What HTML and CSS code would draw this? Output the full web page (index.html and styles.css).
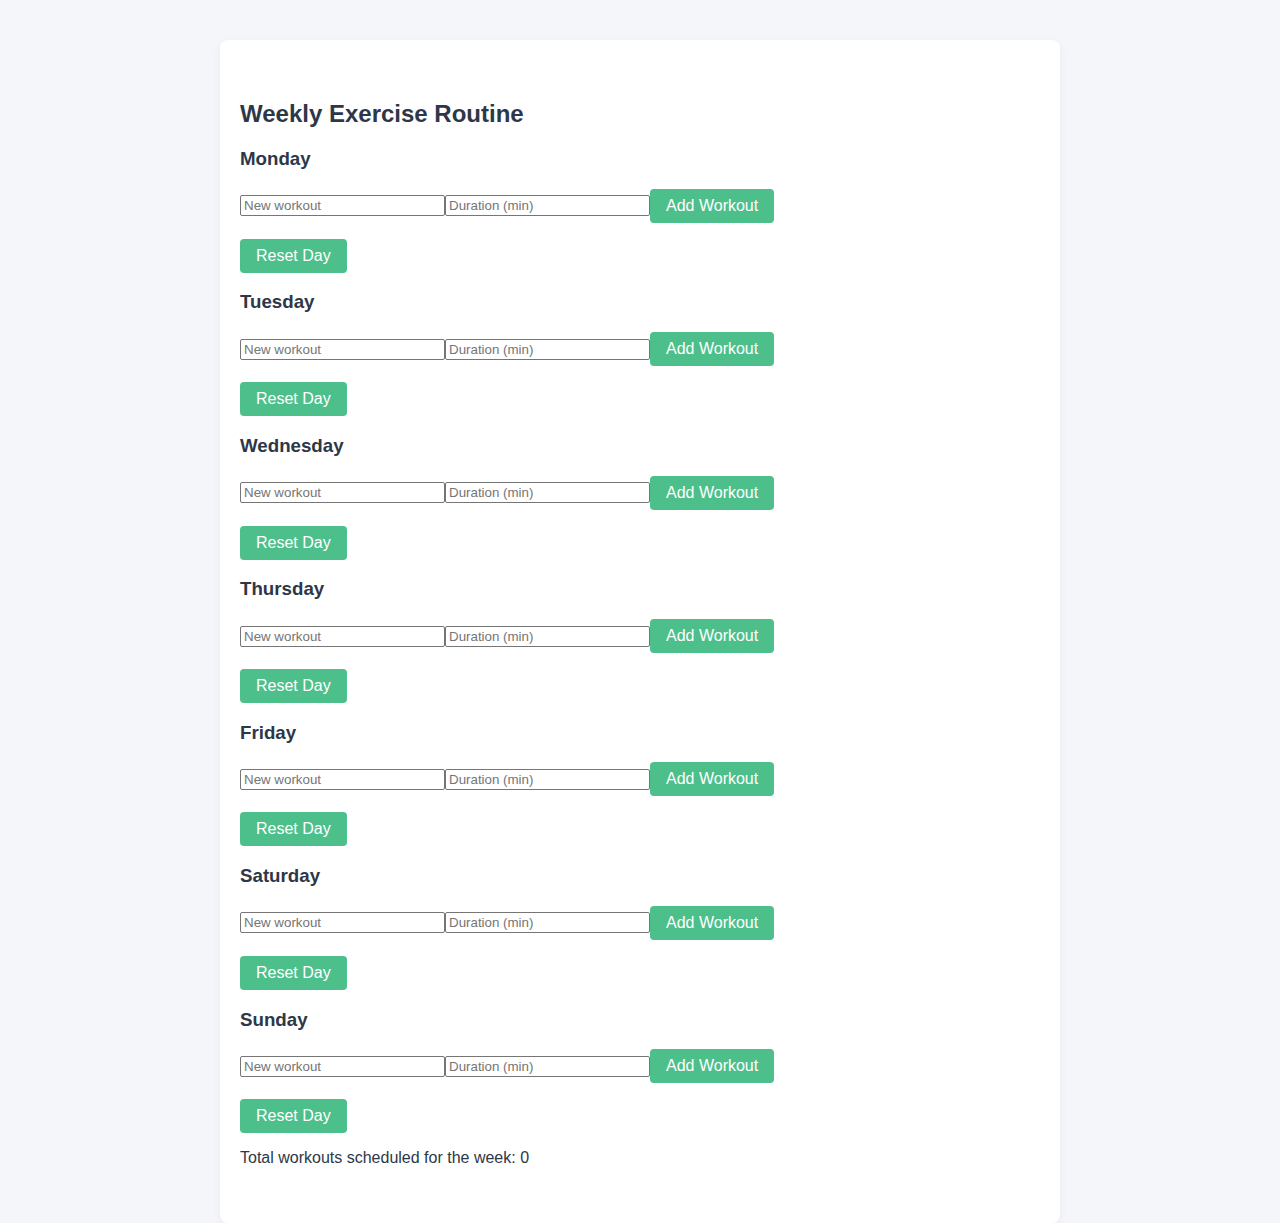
FILE: index.html
```html
<!DOCTYPE html>
<html lang="en">
<head>
<meta charset="utf-8">
<title>Weekly Exercise Routine</title>
<link rel="stylesheet" href="styles.css">
</head>
<body>
<main class="card">
  <h1 class="title">Weekly Exercise Routine</h1>

  <section class="day">
    <h3 class="day-name">Monday</h3>
    <div class="add-row"><input class="field" type="text" placeholder="New workout"><input class="field" type="number" placeholder="Duration (min)"><button class="btn">Add Workout</button></div>
    <button class="btn reset">Reset Day</button>
  </section>

  <section class="day">
    <h3 class="day-name">Tuesday</h3>
    <div class="add-row"><input class="field" type="text" placeholder="New workout"><input class="field" type="number" placeholder="Duration (min)"><button class="btn">Add Workout</button></div>
    <button class="btn reset">Reset Day</button>
  </section>

  <section class="day">
    <h3 class="day-name">Wednesday</h3>
    <div class="add-row"><input class="field" type="text" placeholder="New workout"><input class="field" type="number" placeholder="Duration (min)"><button class="btn">Add Workout</button></div>
    <button class="btn reset">Reset Day</button>
  </section>

  <section class="day">
    <h3 class="day-name">Thursday</h3>
    <div class="add-row"><input class="field" type="text" placeholder="New workout"><input class="field" type="number" placeholder="Duration (min)"><button class="btn">Add Workout</button></div>
    <button class="btn reset">Reset Day</button>
  </section>

  <section class="day">
    <h3 class="day-name">Friday</h3>
    <div class="add-row"><input class="field" type="text" placeholder="New workout"><input class="field" type="number" placeholder="Duration (min)"><button class="btn">Add Workout</button></div>
    <button class="btn reset">Reset Day</button>
  </section>

  <section class="day">
    <h3 class="day-name">Saturday</h3>
    <div class="add-row"><input class="field" type="text" placeholder="New workout"><input class="field" type="number" placeholder="Duration (min)"><button class="btn">Add Workout</button></div>
    <button class="btn reset">Reset Day</button>
  </section>

  <section class="day">
    <h3 class="day-name">Sunday</h3>
    <div class="add-row"><input class="field" type="text" placeholder="New workout"><input class="field" type="number" placeholder="Duration (min)"><button class="btn">Add Workout</button></div>
    <button class="btn reset">Reset Day</button>
  </section>

  <p class="total">Total workouts scheduled for the week: 0</p>
</main>
</body>
</html>
```

FILE: styles.css
```css
html, body {
  margin: 0;
  padding: 0;
}
body {
  background: #f4f6fa;
  font-family: "Liberation Sans", Arial, Helvetica, sans-serif;
  color: #2d3748;
  padding: 40px 0;
}
.card {
  display: block;
  width: 800px;
  margin: 0 auto;
  background: #ffffff;
  border-radius: 8px;
  box-shadow: 0 2px 10px rgba(0, 0, 0, 0.05);
  padding: 40px 20px 40px;
}
.title {
  font-size: 24px;
  font-weight: bold;
  margin: 20px 0 20px;
}
.day-name {
  font-size: 18.72px;
  font-weight: bold;
  margin: 18.72px 0;
}
.add-row {
  display: flex;
  align-items: center;
}
.field {
  width: 205px;
  box-sizing: border-box;
  height: 21px;
  margin: 0;
  padding: 1px 3px;
  border: 1px solid #767676;
  border-radius: 2px;
  font-family: "Liberation Sans", Arial, sans-serif;
  font-size: 13.33px;
  color: #2d3748;
  background: #fff;
  -moz-appearance: textfield;
}
.field::placeholder {
  color: #757575;
}
.field::-webkit-outer-spin-button,
.field::-webkit-inner-spin-button {
  -webkit-appearance: none;
  margin: 0;
}
.btn {
  background: #4dbf8b;
  color: #ffffff;
  border: none;
  border-radius: 4px;
  padding: 8px 16px;
  font-family: "Liberation Sans", Arial, sans-serif;
  font-size: 16px;
  line-height: 18px;
  cursor: pointer;
  margin: 0;
}
.reset {
  display: block;
  margin-top: 16px;
}
.total {
  font-size: 16px;
  margin: 16px 0;
}
```
